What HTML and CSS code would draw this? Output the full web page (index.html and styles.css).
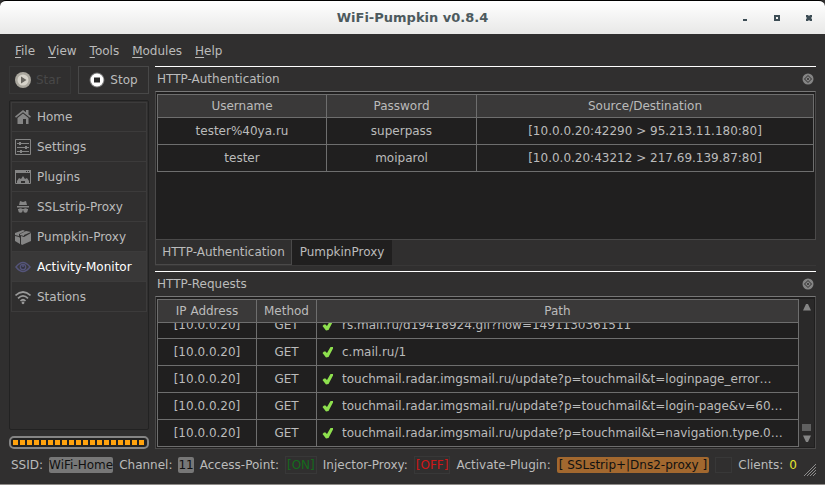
FILE: index.html
```html
<!DOCTYPE html>
<html lang="en">
<head>
<meta charset="utf-8">
<title>WiFi-Pumpkin v0.8.4</title>
<link rel="stylesheet" href="styles.css">
</head>
<body>
<header class="titlebar">
  <h1>WiFi-Pumpkin v0.8.4</h1>
  <div class="window-buttons">
    <button aria-label="Minimize"><svg width="8" height="8"><path d="M2 5h4v2H2z"/></svg></button>
    <button aria-label="Maximize"><svg width="8" height="8"><path fill-rule="evenodd" d="M1 1h6v6H1zM3 3v2h2V3z"/></svg></button>
    <button aria-label="Close"><svg width="8" height="8"><path d="M1 1h2l1 1 1-1h2v2L6 4l1 1v2H5L4 6 3 7H1V5l1-1-1-1z"/></svg></button>
  </div>
</header>
<nav class="menu">
  <button><u>F</u>ile</button><button><u>V</u>iew</button><button><u>T</u>ools</button><button><u>M</u>odules</button><button><u>H</u>elp</button>
</nav>
<main class="main">
  <aside class="side">
    <div class="actions">
      <button class="action" disabled><svg width="16" height="16"><circle cx="8" cy="8" r="8" fill="#aaa79e"/><circle cx="8" cy="8" r="5.5" fill="#d6d3ca"/><path d="M6 4.5l5.5 3.5L6 11.5z" fill="#66645e"/></svg><span>Star</span></button>
      <button class="action"><svg width="16" height="16"><circle cx="8" cy="8" r="7.500" fill="#777"/><circle cx="8" cy="8" r="6.500" fill="#fff"/><path d="M5 5.500h6v5H5z" fill="#282828"/></svg><span>Stop</span></button>
    </div>
    <ul class="pages">
      <li><a href="#home"><svg width="16" height="16"><path d="M8 1L0 7.500l1 1.300 7-5.600 7 5.600 1-1.300-2.500-2V1h-2.500v2.300zM2.500 9v6H8v-5h3v5h2.500V9L8 4.500z"/></svg>Home</a></li>
      <li><a href="#settings"><svg width="16" height="16"><path d="M.5.5h15v15H.5zM2 4.500h12M2 8.500h12M2 12.500h12" fill="none" stroke="#858585"/><path d="M4 3h2v3H4zM10 7h2v3h-2zM5 11h2v3H5z"/></svg>Settings</a></li>
      <li><a href="#plugins"><svg width="16" height="16"><path d="M.5 2.500h15v12H.5z" fill="none" stroke="#858585"/><path d="M0 1h16v3H0z"/><path d="M11 2h1v1h-1zM13 2h1v1h-1z" fill="#302f2f"/><path d="M2 14v-2l2-3 2 1 2-3 2 3 2-1 2 3v2h-4v-2H6v2z"/></svg>Plugins</a></li>
      <li><a href="#sslstrip"><svg width="16" height="16"><path d="M5 2l3 1 3-1 1 4H4zM2 7h12v1.500H2z"/><circle cx="5.500" cy="11.500" r="2.200"/><circle cx="10.500" cy="11.500" r="2.200"/><path d="M3 10h10v1H3z"/></svg>SSLstrip-Proxy</a></li>
      <li><a href="#pumpkin"><svg width="16" height="16"><path d="M0 4l8-3 2 1-6 3v2L0 6zM5 5l6-3 5 1-7 3v1L5 6zM0 7l4 1 1 1v6l-5-3zM6 7l3 1 7-4v8l-9 4-1-1z"/></svg>Pumpkin-Proxy</a></li>
      <li class="current"><a href="#activity"><svg width="16" height="16"><path d="M1 8q7-9 14 0-7 9-14 0z" fill="none" stroke="#54547a" stroke-width="1.500"/><circle cx="8" cy="8" r="2.700" fill="#343443" stroke="#54547a" stroke-width="1.300"/><circle cx="8" cy="7" r="1" fill="#54547a"/></svg>Activity-Monitor</a></li>
      <li><a href="#stations"><svg width="16" height="16"><path d="M.5 6.500q7.500-7 15 0M3 9.300q5-5 10 0M5.500 12q2.500-2.500 5 0" fill="none" stroke="#999" stroke-width="1.700"/><circle cx="8" cy="13.800" r="1.400" fill="#999"/></svg>Stations</a></li>
    </ul>
    <div class="progress" role="progressbar" aria-label="Activity"><span></span></div>
  </aside>
  <div class="docks">
    <section class="dock dock-auth">
      <div class="dock-title"><h2>HTTP-Authentication</h2><button aria-label="Close HTTP-Authentication"><svg width="12" height="12"><circle cx="6" cy="6" r="5.500" fill="#858585"/><path d="M6 2.500L9.500 6 6 9.500 2.500 6z" fill="#858585" stroke="#302f2f"/><circle cx="6" cy="6" r="1" fill="#302f2f"/></svg></button></div>
      <div class="frame">
        <table class="grid auth">
          <thead><tr><th>Username</th><th>Password</th><th>Source/Destination</th></tr></thead>
          <tbody>
            <tr><td>tester%40ya.ru</td><td>superpass</td><td>[10.0.0.20:42290 &gt; 95.213.11.180:80]</td></tr>
            <tr><td>tester</td><td>moiparol</td><td>[10.0.0.20:43212 &gt; 217.69.139.87:80]</td></tr>
          </tbody>
        </table>
      </div>
      <div class="tabs" role="tablist"><button role="tab" aria-selected="true">HTTP-Authentication</button><button role="tab" aria-selected="false">PumpkinProxy</button></div>
    </section>
    <section class="dock dock-requests">
      <div class="dock-title"><h2>HTTP-Requests</h2><button aria-label="Close HTTP-Requests"><svg width="12" height="12"><circle cx="6" cy="6" r="5.500" fill="#858585"/><path d="M6 2.500L9.500 6 6 9.500 2.500 6z" fill="#858585" stroke="#302f2f"/><circle cx="6" cy="6" r="1" fill="#302f2f"/></svg></button></div>
      <div class="frame">
        <svg class="defs" width="0" height="0"><symbol id="tick" viewBox="0 0 12 12"><path d="M.5 7L2 5.500h1.500L5 7l3.500-6H11v1.500L6.500 11 4 11.500z" fill="#8ee04e"/></symbol></svg>
        <table class="grid requests">
          <thead><tr><th>IP Address</th><th>Method</th><th>Path</th></tr></thead>
          <tbody>
            <tr><td>[10.0.0.20]</td><td>GET</td><td><svg width="12" height="12"><use href="#tick"/></svg>rs.mail.ru/d19418924.gif?now=1491130361511</td></tr>
            <tr><td>[10.0.0.20]</td><td>GET</td><td><svg width="12" height="12"><use href="#tick"/></svg>c.mail.ru/1</td></tr>
            <tr><td>[10.0.0.20]</td><td>GET</td><td><svg width="12" height="12"><use href="#tick"/></svg>touchmail.radar.imgsmail.ru/update?p=touchmail&amp;t=loginpage_error…</td></tr>
            <tr><td>[10.0.0.20]</td><td>GET</td><td><svg width="12" height="12"><use href="#tick"/></svg>touchmail.radar.imgsmail.ru/update?p=touchmail&amp;t=login-page&amp;v=60…</td></tr>
            <tr><td>[10.0.0.20]</td><td>GET</td><td><svg width="12" height="12"><use href="#tick"/></svg>touchmail.radar.imgsmail.ru/update?p=touchmail&amp;t=navigation.type.0…</td></tr>
          </tbody>
        </table>
        <div class="scroll">
          <button aria-label="Scroll up"><svg width="8" height="8"><path d="M0 7.500h8L5 1H3z"/></svg></button>
          <span class="thumb"></span>
          <button aria-label="Scroll down"><svg width="8" height="8"><path d="M0 .5h8L5 7H3z"/></svg></button>
        </div>
      </div>
    </section>
  </div>
</main>
<footer class="status">
  <span>SSID:</span><span class="chip">WiFi-Home</span>
  <span>Channel:</span><span class="chip">11</span>
  <span>Access-Point:</span><span class="state on">[ON]</span>
  <span>Injector-Proxy:</span><span class="state off">[OFF]</span>
  <span>Activate-Plugin:</span><span class="chip plugin">[ SSLstrip+|Dns2-proxy ]</span>
  <span class="blank"></span>
  <span>Clients:</span><span class="count">0</span>
  <svg class="grip" width="13" height="13"><path d="M1 13L13 1M4 13l9-9M7 13l6-6M10 13l3-3" stroke="#8d8d8d"/></svg>
</footer>
</body>
</html>
```

FILE: styles.css
```css
* { box-sizing: border-box; }

body {
  margin: 0;
  height: 100vh;
  display: flex;
  flex-direction: column;
  overflow: hidden;
  background: #302f2f;
  border-bottom: 1px solid #8e8b88;
  color: #bbb;
  font: 12px/16px "DejaVu Sans", sans-serif;
}

button {
  margin: 0;
  padding: 0;
  border: 0;
  background: none;
  color: inherit;
  font: inherit;
}

h1, h2 { margin: 0; font-size: inherit; }
h2 { font-weight: normal; }
svg { display: block; flex: none; fill: #858585; }

.titlebar {
  display: grid;
  grid-template-columns: 1fr auto 1fr;
  align-items: center;
  height: 34px;
  padding: 0 12px;
  border-top: 1px solid #000;
  border-radius: 6px 6px 0 0;
  background: linear-gradient(#fff, #e8e8e7);
  color: #4d5a5e;
}
.titlebar h1 { grid-column: 2; font-size: 13px; }
.window-buttons { display: flex; justify-content: flex-end; gap: 24px; }
.window-buttons svg { fill: #3d4d55; }

.menu { display: flex; gap: 13px; height: 32px; padding: 2px 15px 0; }
.menu u { text-underline-offset: 2px; }

.main {
  flex: 1;
  min-height: 0;
  display: grid;
  grid-template-columns: 140px 1fr;
  gap: 6px;
  padding: 0 9px;
}

.side { display: flex; flex-direction: column; min-height: 0; }
.actions { display: grid; grid-template-columns: 62px 1fr; gap: 7px; height: 28px; }
.action { display: flex; align-items: center; justify-content: center; gap: 5px; border: 1px solid #484848; }
.action:disabled { justify-content: flex-start; padding-left: 5px; border-color: #383838; color: #484848; }

.pages {
  flex: 1;
  min-height: 0;
  margin: 6px 0;
  padding: 1px;
  border: 1px solid #222;
  border-radius: 2px;
  list-style: none;
}
.pages li { height: 30px; border: 1px solid #3c3b3b; border-top-width: 0; }
.pages li:first-child { border-top-width: 1px; }
.pages a { display: flex; align-items: center; gap: 6px; height: 100%; padding-left: 3px; color: inherit; text-decoration: none; }
.pages .current { background: #393838; color: #fff; }

.progress { height: 13px; padding: 2px; border: 2px solid #858585; border-radius: 5px; background: #222; }
.progress span { display: block; height: 5px; background: repeating-linear-gradient(90deg, #ffa20d 0 5px, #222 5px 7px); }

.docks { display: flex; flex-direction: column; gap: 5px; min-width: 0; min-height: 0; }
.dock { display: flex; flex-direction: column; min-height: 0; border-top: 1px solid #fff; }
.dock-auth { flex: 200 1 0; }
.dock-requests { flex: 178 1 0; }
.dock-title { display: flex; align-items: center; justify-content: space-between; height: 24px; padding: 0 2px; }
.frame { flex: 1; min-height: 0; display: flex; align-items: flex-start; padding: 2px 1px 1px; border: 1px solid #4a4949; border-top-color: #777; background: #201f1f; }

.grid { flex: 1; min-width: 0; border-collapse: collapse; table-layout: fixed; text-align: center; }
.grid th { background: #3a3939; font-weight: normal; }

.auth { width: 100%; }
.auth th, .auth td { height: 27px; padding: 0; border: 1px solid #6e6e6e; }
.auth th { height: 23px; }
.auth th:nth-child(1) { width: 169px; }
.auth th:nth-child(2) { width: 150px; }

/* The header stays put while the rows rest at the end of the list. */
.requests { display: flex; flex-direction: column; height: 100%; border: 1px solid #6e6e6e; }
.requests thead { display: block; border-bottom: 1px solid #6e6e6e; }
.requests tbody { display: flex; flex: 1; flex-direction: column; justify-content: flex-end; min-height: 0; overflow: hidden; }
.requests tr { display: grid; flex: none; grid-template-columns: 98px 60px 1fr; height: 27px; }
.requests thead tr { height: 22px; }
.requests tbody tr + tr { border-top: 1px solid #6e6e6e; }
.requests th, .requests td { display: flex; align-items: center; justify-content: center; min-width: 0; padding: 0; overflow: hidden; white-space: nowrap; }
.requests th + th, .requests td + td { border-left: 1px solid #6e6e6e; }
.requests td:last-child { justify-content: flex-start; gap: 8px; padding-left: 5px; }

.defs { position: absolute; }
.scroll { display: flex; flex-direction: column; align-items: center; align-self: stretch; width: 15px; padding: 4px 0; background: #2a2929; }
.thumb { width: 9px; height: 7px; margin: auto 0 4px; background: #606060; }

.tabs { display: flex; height: 26px; border-bottom: 1px solid #383737; }
.tabs button { min-width: 100px; padding: 0 7px; background: #201f1f; }
.tabs [aria-selected="true"] { min-width: 137px; padding: 0 4px; border: 1px solid #4a4949; border-top: 0; background: #302f2f; }

.status { display: flex; align-items: center; gap: 6px; height: 35px; padding: 0 9px 4px 11px; white-space: nowrap; }
.chip { border-radius: 2px; background: #777; color: #111; }
.plugin { padding: 0 2px; background: #a2682f; }
.state { padding: 0 1px; border: 1px solid #383838; }
.on { color: #146b1c; }
.off { color: #d01717; }
.blank { flex: 1; height: 16px; border: 1px solid #383838; }
.count { color: #e6e62e; }
.grip { align-self: flex-end; margin-bottom: 4px; }
```
